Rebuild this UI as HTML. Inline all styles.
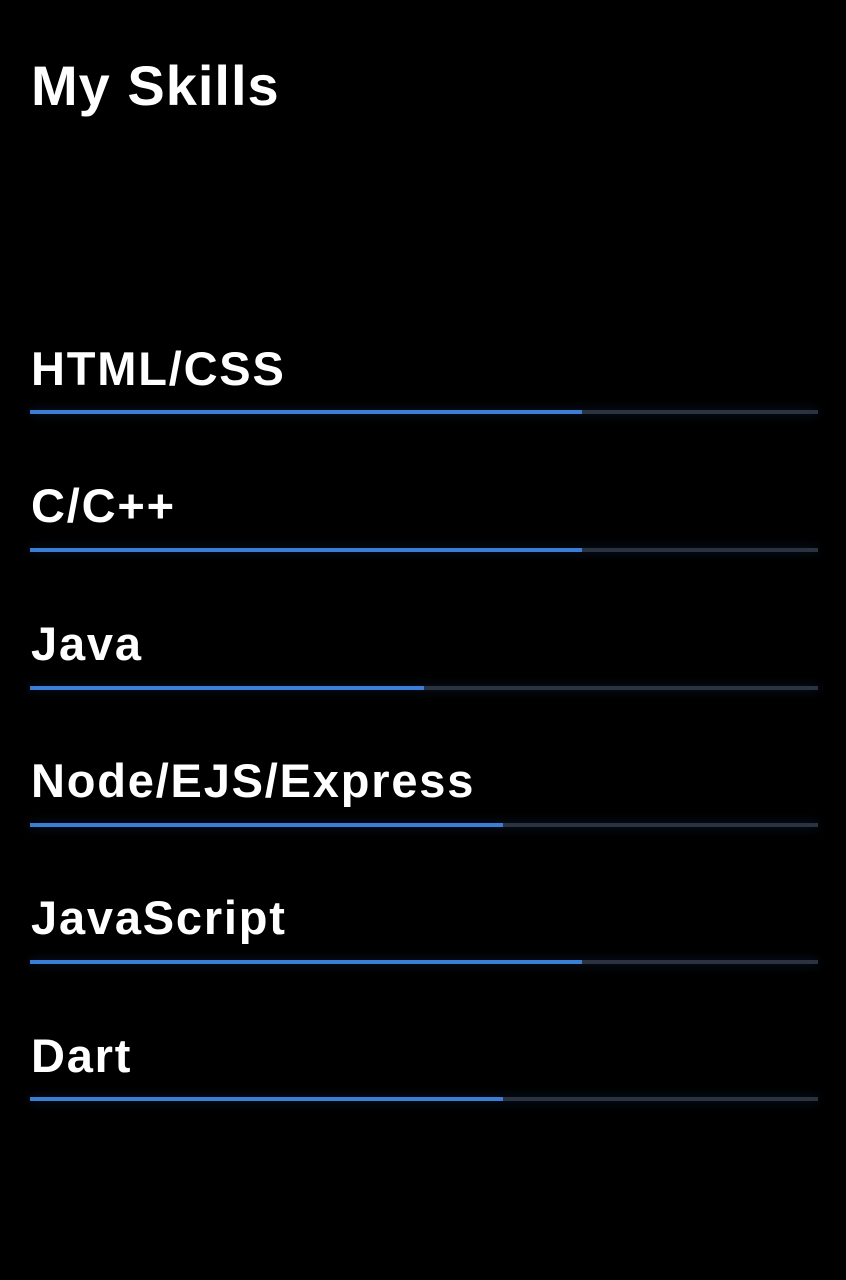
<!DOCTYPE html>
<html><head><style>
html,body{margin:0;padding:0;background:#000;width:846px;height:1280px;overflow:hidden}
body{position:relative;font-family:"Liberation Sans",sans-serif;color:#fff;font-weight:bold}
.t{position:absolute;left:31px;font-size:47px;line-height:1;letter-spacing:1.8px}
.h{position:absolute;left:31px;top:58px;font-size:56px;line-height:1;letter-spacing:1px}
.bar{position:absolute;left:30px;width:788px;height:4px;background:#2b3340;box-shadow:0 0 10px rgba(40,90,160,0.35)}
.bar i{display:block;height:4px;background:#3a7fd5}
</style></head><body>
<div class="h">My Skills</div>
<div class="t" style="top:345px">HTML/CSS</div>
<div class="bar" style="top:410px"><i style="width:552px"></i></div>
<div class="t" style="top:482px">C/C++</div>
<div class="bar" style="top:548px"><i style="width:552px"></i></div>
<div class="t" style="top:620px">Java</div>
<div class="bar" style="top:686px"><i style="width:394px"></i></div>
<div class="t" style="top:757px">Node/EJS/Express</div>
<div class="bar" style="top:823px"><i style="width:473px"></i></div>
<div class="t" style="top:894px">JavaScript</div>
<div class="bar" style="top:960px"><i style="width:552px"></i></div>
<div class="t" style="top:1032px">Dart</div>
<div class="bar" style="top:1097px"><i style="width:473px"></i></div>
</body></html>
